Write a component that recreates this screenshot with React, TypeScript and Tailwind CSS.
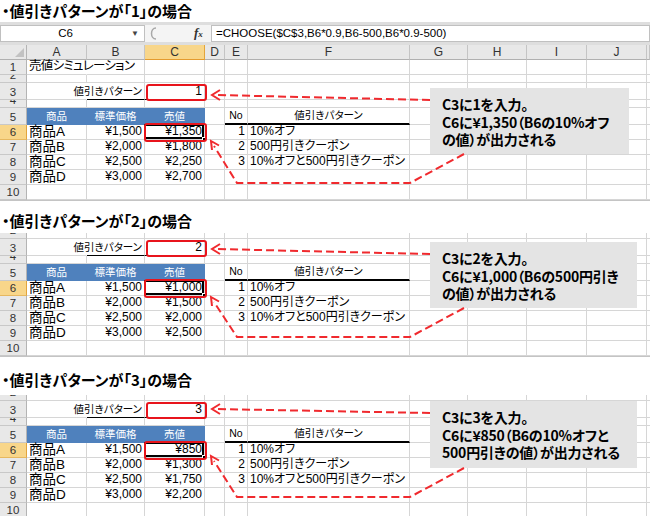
import React from 'react';

const COLS =
  'grid grid-rows-1 grid-cols-[27px_60px_58px_60px_20px_23px_162px_58px_59px_60px_60px_1fr]';

const CELL =
  'border-r border-b border-[#d6d6d6] flex items-end px-[2px] pb-[1px] whitespace-nowrap leading-[13px]';

type Cell = { t?: React.ReactNode; a?: 'l' | 'r' | 'c'; k?: string; s?: string; ov?: React.ReactNode };

const ALIGN: Record<string, string> = { l: 'justify-start', r: 'justify-end', c: 'justify-center' };

function Row({
  n,
  h,
  cells = [],
  hl = false,
  part = false,
}: {
  n: string;
  h: string;
  cells?: (Cell | undefined)[];
  hl?: boolean;
  part?: boolean;
}) {
  return (
    <div className={`${COLS} ${h}`}>
      <div
        className={`border-r border-b text-[11.5px] text-[#333] ${
          hl ? 'bg-[#f8d68a] border-r-[#e2a53c] border-b-[#e6b860]' : 'bg-[#e8e8e8] border-r-[#b4b4b4] border-b-[#c8c8c8]'
        } ${part ? 'flex flex-col justify-end items-center overflow-hidden' : 'flex items-end justify-center pb-[1px] overflow-hidden'}`}
      >
        <span className={part ? 'leading-[15px]' : 'leading-[12px]'}>{n}</span>
      </div>
      {Array.from({ length: 11 }).map((_, i) => {
        const c = cells[i] || {};
        return (
          <div key={i} className={`${CELL} ${ALIGN[c.a || 'l']} ${c.s || 'text-[12.5px]'} ${c.k || ''}`}>
            {c.t}
            {c.ov}
          </div>
        );
      })}
    </div>
  );
}

const BLUE = 'bg-[#4f81bd] text-white border-r-[#4f81bd] border-b-[#4f81bd]';

function C3Box() {
  return <div className="absolute left-[1px] top-[1px] -right-[3px] -bottom-[2px] border-2 border-[#e8141c] rounded-[3px]" />;
}

function C6Box() {
  return (
    <>
      <div className="absolute -left-[1px] -top-[1px] right-0 bottom-0 border-2 border-black" />
      <div className="absolute -right-[3px] -bottom-[3px] w-[5px] h-[5px] bg-black border border-white" />
      <div className="absolute -left-[1px] -top-[2px] -right-[3px] -bottom-[3px] border-2 border-[#e8141c] rounded-[3px]" />
    </>
  );
}

function Sheet({ v, c, full }: { v: string; c: string[]; full: boolean }) {
  const names = ['商品A', '商品B', '商品C', '商品D'];
  const std = ['¥1,500', '¥2,000', '¥2,500', '¥3,000'];
  const pats = ['10%オフ', '500円引きクーポン', '10%オフと500円引きクーポン'];
  return (
    <div className="flex flex-col">
      {full && (
        <Row
          n="1"
          h="h-[15px]"
          cells={[{ t: '売値シミュレーション', k: 'border-r-transparent tracking-[-0.7px]', s: 'text-[12.5px]' }]}
        />
      )}
      <Row n="2" h={full ? 'h-[8px]' : 'h-[6px]'} part={!full} />
      <Row
        n="3"
        h="h-[17px]"
        cells={[
          { k: 'border-r-transparent' },
          { t: '値引きパターン', a: 'r', s: 'text-[10.5px]', k: 'border-b-black' },
          { t: v, a: 'r', s: 'text-[12px]', k: 'border-b-black relative', ov: <C3Box /> },
        ]}
      />
      <Row n="4" h="h-[8px]" />
      <Row
        n="5"
        h="h-[17px]"
        cells={[
          { t: '商品', a: 'c', s: 'text-[10.5px]', k: BLUE },
          { t: '標準価格', a: 'c', s: 'text-[10.5px]', k: BLUE },
          { t: '売値', a: 'c', s: 'text-[10.5px]', k: BLUE },
          undefined,
          { t: 'No', a: 'c', s: 'text-[10.5px]', k: 'border-b-2 border-b-black' },
          { t: '値引きパターン', a: 'c', s: 'text-[10.5px]', k: 'border-b-2 border-b-black' },
        ]}
      />
      {names.map((nm, i) => (
        <Row
          key={nm}
          n={String(6 + i)}
          h="h-[15px]"
          hl={i === 0}
          cells={[
            { t: nm, s: 'text-[13.5px]' },
            { t: std[i], a: 'r', s: 'text-[12px]' },
            { t: c[i], a: 'r', s: 'text-[12px]', k: i === 0 ? 'relative' : '', ov: i === 0 ? <C6Box /> : undefined },
            undefined,
            i < 3 ? { t: String(i + 1), a: 'r', s: 'text-[12px]' } : undefined,
            i < 3 ? { t: pats[i], s: 'text-[12px]' } : undefined,
          ]}
        />
      ))}
      <Row n="10" h="h-[15px]" />
    </div>
  );
}

function ColHeader() {
  const letters = ['A', 'B', 'C', 'D', 'E', 'F', 'G', 'H', 'I', 'J', ''];
  return (
    <div className={`${COLS} h-[15px]`}>
      <div className="bg-[#e8e8e8] border-r border-b border-r-[#b4b4b4] border-b-[#b0b0b0] relative">
        <svg className="absolute right-[2px] bottom-[2px]" width="9" height="9" viewBox="0 0 9 9">
          <path d="M9 0 L9 9 L0 9 Z" fill="#c2c2c2" />
        </svg>
      </div>
      {letters.map((l, i) => (
        <div
          key={i}
          className={`border-r border-b flex items-center justify-center text-[12px] leading-[12px] ${
            l === 'C'
              ? 'bg-[#f8d68a] border-r-[#e2a53c] border-b-[#e49b2e] text-[#333]'
              : 'bg-[#e8e8e8] border-r-[#c4c4c4] border-b-[#b0b0b0] text-[#333]'
          }`}
        >
          {l}
        </div>
      ))}
    </div>
  );
}

function FormulaBar() {
  return (
    <div className="h-[23px] bg-[#dedede] pt-[3px] pb-[3px] flex">
      <div className="w-[145px] bg-white border border-[#c0c0c0] flex items-center text-[11.5px]">
        <div className="flex-1 text-center pl-[4px]">C6</div>
        <div className="w-[18px] text-[8px] text-[#444] text-center">▼</div>
      </div>
      <div className="w-[66px] bg-[#f4f4f4] flex items-center">
        <svg className="ml-[3px]" width="10" height="13" viewBox="0 0 10 13">
          <path d="M8 1 C2 1 2 12 8 12" stroke="#a8a8a8" strokeWidth="1.5" fill="none" />
        </svg>
        <span className="ml-[36px] italic font-bold font-['Liberation_Serif',serif] text-[13px] text-[#333] leading-[13px]">
          f<span className="text-[9px]">x</span>
        </span>
      </div>
      <div className="flex-1 bg-white border border-[#c0c0c0] pl-[4px] flex items-center text-[11.5px] font-['Liberation_Sans',sans-serif] [font-feature-settings:normal]">
        =CHOOSE($C$3,B6*0.9,B6-500,B6*0.9-500)
      </div>
    </div>
  );
}

function Title({ n, k }: { n: string; k: string }) {
  return (
    <div className={`flex pl-[2px] font-['Noto_Sans_CJK_JP',sans-serif] font-bold text-[15px] leading-[16px] ${k}`}>
      ・値引きパターンが「{n}」の場合
    </div>
  );
}

function Callout({ k, lines }: { k: string; lines: string[] }) {
  return (
    <div
      className={`absolute bg-[#e4e4e4] pl-[12px] pt-[8px] font-['Noto_Sans_CJK_JP',sans-serif] font-bold text-[14px] leading-[17.5px] whitespace-nowrap tracking-[-0.2px] ${k}`}
    >
      {lines.map((l) => (
        <div key={l}>{l}</div>
      ))}
    </div>
  );
}

function Arrows() {
  const secs = [
    { T: 88, h: 66, a: 95, b: 141, H: 183 },
    { T: 242, h: 66, a: 249, b: 297, H: 337 },
    { T: 401, h: 67, a: 409, b: 456, H: 497 },
  ];
  return (
    <svg className="absolute left-0 top-0 pointer-events-none" width={650} height={516}>
      {secs.map((s, i) => (
        <g key={i} stroke="#f02a2e" strokeWidth={2} fill="none">
          <path d={`M430 ${s.T + 12} L216 ${s.a}`} strokeDasharray="8 4" />
          <path d={`M220 ${s.a - 5} L212 ${s.a} L220 ${s.a + 5}`} />
          <path d={`M464 ${s.T + s.h} L410 ${s.H} L237 ${s.H} L214 ${s.b + 5}`} strokeDasharray="8 4" />
          <path d={`M212 ${s.b + 9} L211 ${s.b} L219 ${s.b + 4.5}`} />
        </g>
      ))}
    </svg>
  );
}

export default function App() {
  return (
    <div className="relative w-[650px] h-[516px] overflow-hidden bg-white text-black font-['Liberation_Sans','Noto_Sans_CJK_JP',sans-serif] [font-feature-settings:'palt']">
      <div className="flex flex-col">
        <Title n="1" k="h-[22px] items-center" />
        <FormulaBar />
        <ColHeader />
        <Sheet v="1" c={['¥1,350', '¥1,800', '¥2,250', '¥2,700']} full />
        <div className="h-[1px] bg-[#c4c4c4]" />
        <Title n="2" k="h-[32px] items-end pb-[4px]" />
        <Sheet v="2" c={['¥1,000', '¥1,500', '¥2,000', '¥2,500']} full={false} />
        <div className="h-[1px] bg-[#c4c4c4]" />
        <Title n="3" k="h-[38px] items-end pb-[7px]" />
        <Sheet v="3" c={['¥850', '¥1,300', '¥1,750', '¥2,200']} full={false} />
      </div>
      <Callout
        k="left-[430px] top-[88px] w-[199px] h-[66px]"
        lines={['C3に1を入力。', 'C6に¥1,350（B6の10%オフ', 'の値）が出力される']}
      />
      <Callout
        k="left-[430px] top-[242px] w-[207px] h-[66px]"
        lines={['C3に2を入力。', 'C6に¥1,000（B6の500円引き', 'の値）が出力される']}
      />
      <Callout
        k="left-[430px] top-[401px] w-[207px] h-[67px]"
        lines={['C3に3を入力。', 'C6に¥850（B6の10%オフと', '500円引きの値）が出力される']}
      />
      <Arrows />
    </div>
  );
}
